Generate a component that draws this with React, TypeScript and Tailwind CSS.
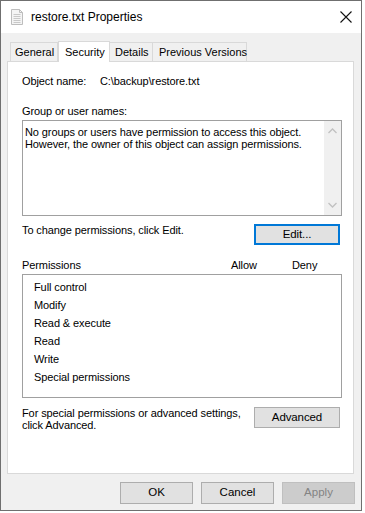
import React from "react";

const font = { fontFamily: '"Liberation Sans", Arial, sans-serif' };

function WinButton({
  label,
  focused,
  disabled,
  className = "",
}: {
  label: string;
  focused?: boolean;
  disabled?: boolean;
  className?: string;
}) {
  const tone = disabled
    ? "bg-[#cccccc] border-[#bfbfbf] text-[#838383]"
    : focused
      ? "bg-[#e1e1e1] border-2 border-[#0078d7] text-black"
      : "bg-[#e1e1e1] border-[#adadad] text-black";
  return (
    <div
      className={`flex items-center justify-center border text-[11.5px] leading-none whitespace-nowrap ${tone} ${className}`}
    >
      {label}
    </div>
  );
}

function FileIcon() {
  return (
    <svg width="12" height="16" viewBox="0 0 12 16" className="shrink-0">
      <path d="M0.5 0.5h8l3 3v12h-11z" fill="#f4f4f4" stroke="#bdbdbd" />
      <path d="M8.5 0.5v3h3" fill="none" stroke="#bdbdbd" />
      <path d="M2.5 5.5h7M2.5 7.5h7M2.5 9.5h7M2.5 11.5h7M2.5 13.5h7" stroke="#c8c8c8" />
    </svg>
  );
}

function Chevron({ up }: { up?: boolean }) {
  return (
    <svg width="9" height="6" viewBox="0 0 9 6">
      <path
        d={up ? "M0.5 5L4.5 1L8.5 5" : "M0.5 1L4.5 5L8.5 1"}
        fill="none"
        stroke="#c1c1c1"
        strokeWidth="1.3"
      />
    </svg>
  );
}

export default function App() {
  const permissions = [
    "Full control",
    "Modify",
    "Read & execute",
    "Read",
    "Write",
    "Special permissions",
  ];

  return (
    <div className="w-[365px] h-[513px] bg-white whitespace-nowrap" style={font}>
      <div className="w-[362px] h-[511px] border border-[#6f6f6f] bg-[#f0f0f0] flex flex-col">
        {/* title bar */}
        <div className="h-[32px] bg-white flex items-center pl-[10px] pr-[9px]">
          <FileIcon />
          <span className="ml-[8px] text-[12px] text-black">restore.txt Properties</span>
          <svg width="12" height="12" viewBox="0 0 12 12" className="ml-auto">
            <path d="M0.5 0.5L11.5 11.5M11.5 0.5L0.5 11.5" stroke="#111" strokeWidth="1.1" />
          </svg>
        </div>

        {/* tabs */}
        <div className="flex items-end h-[28px] pl-[9px] text-[11px] text-black">
          <div className="h-[19px] px-[4px] flex items-center border border-b-0 border-[#d9d9d9] bg-[#f0f0f0] w-[48px]">
            General
          </div>
          <div className="h-[21px] -mb-px relative z-10 flex items-start pt-[2px] pl-[6px] border border-b-0 border-[#d9d9d9] bg-white w-[52px]">
            Security
          </div>
          <div className="h-[19px] px-[5px] flex items-center border border-b-0 border-l-0 border-[#d9d9d9] bg-[#f0f0f0] w-[43px]">
            Details
          </div>
          <div className="h-[19px] px-[6px] flex items-center border border-b-0 border-l-0 border-[#d9d9d9] bg-[#f0f0f0] w-[94px]">
            Previous Versions
          </div>
        </div>

        {/* panel */}
        <div className="ml-[6px] w-[347px] h-[413px] border border-[#d9d9d9] bg-white pl-[14px] text-[11px] tracking-[-0.1px] text-black flex flex-col">
          <div className="mt-[11px] flex leading-[16px]">
            <span className="w-[78px]">Object name:</span>
            <span>C:\backup\restore.txt</span>
          </div>

          <div className="mt-[14px] leading-[16px]">Group or user names:</div>
          <div className="mt-[1px] w-[320px] h-[96px] border border-[#a0a0a0] flex">
            <div className="flex-1 pl-[2px] pt-[5px] leading-[12px]">
              No groups or users have permission to access this object.
              <br />
              However, the owner of this object can assign permissions.
            </div>
            <div className="w-[17px] bg-[#f0f0f0] flex flex-col items-center justify-between py-[7px]">
              <Chevron up />
              <Chevron />
            </div>
          </div>

          <div className="mt-[8px] flex items-start">
            <span className="leading-[16px] -mt-[2px]">To change permissions, click Edit.</span>
            <WinButton label="Edit..." focused className="ml-auto mr-[13px] w-[86px] h-[21px]" />
          </div>

          <div className="mt-[12px] flex leading-[16px]">
            <span className="w-[209px]">Permissions</span>
            <span className="w-[61px]">Allow</span>
            <span>Deny</span>
          </div>
          <div className="mt-[1px] w-[320px] h-[124px] border border-[#a0a0a0] pl-[11px] pt-[3px]">
            {permissions.map((p) => (
              <div key={p} className="h-[18px] flex items-center">
                {p}
              </div>
            ))}
          </div>

          <div className="mt-[9px] flex items-start">
            <span className="leading-[12px] mt-0">
              For special permissions or advanced settings,
              <br />
              click Advanced.
            </span>
            <WinButton label="Advanced" className="ml-auto mr-[13px] w-[86px] h-[21px]" />
          </div>
        </div>

        {/* dialog buttons */}
        <div className="mt-[8px] flex justify-end pr-[6px] gap-[8px]">
          <WinButton label="OK" className="w-[73px] h-[22px]" />
          <WinButton label="Cancel" className="w-[73px] h-[22px]" />
          <WinButton label="Apply" disabled className="w-[73px] h-[22px]" />
        </div>
      </div>
    </div>
  );
}
